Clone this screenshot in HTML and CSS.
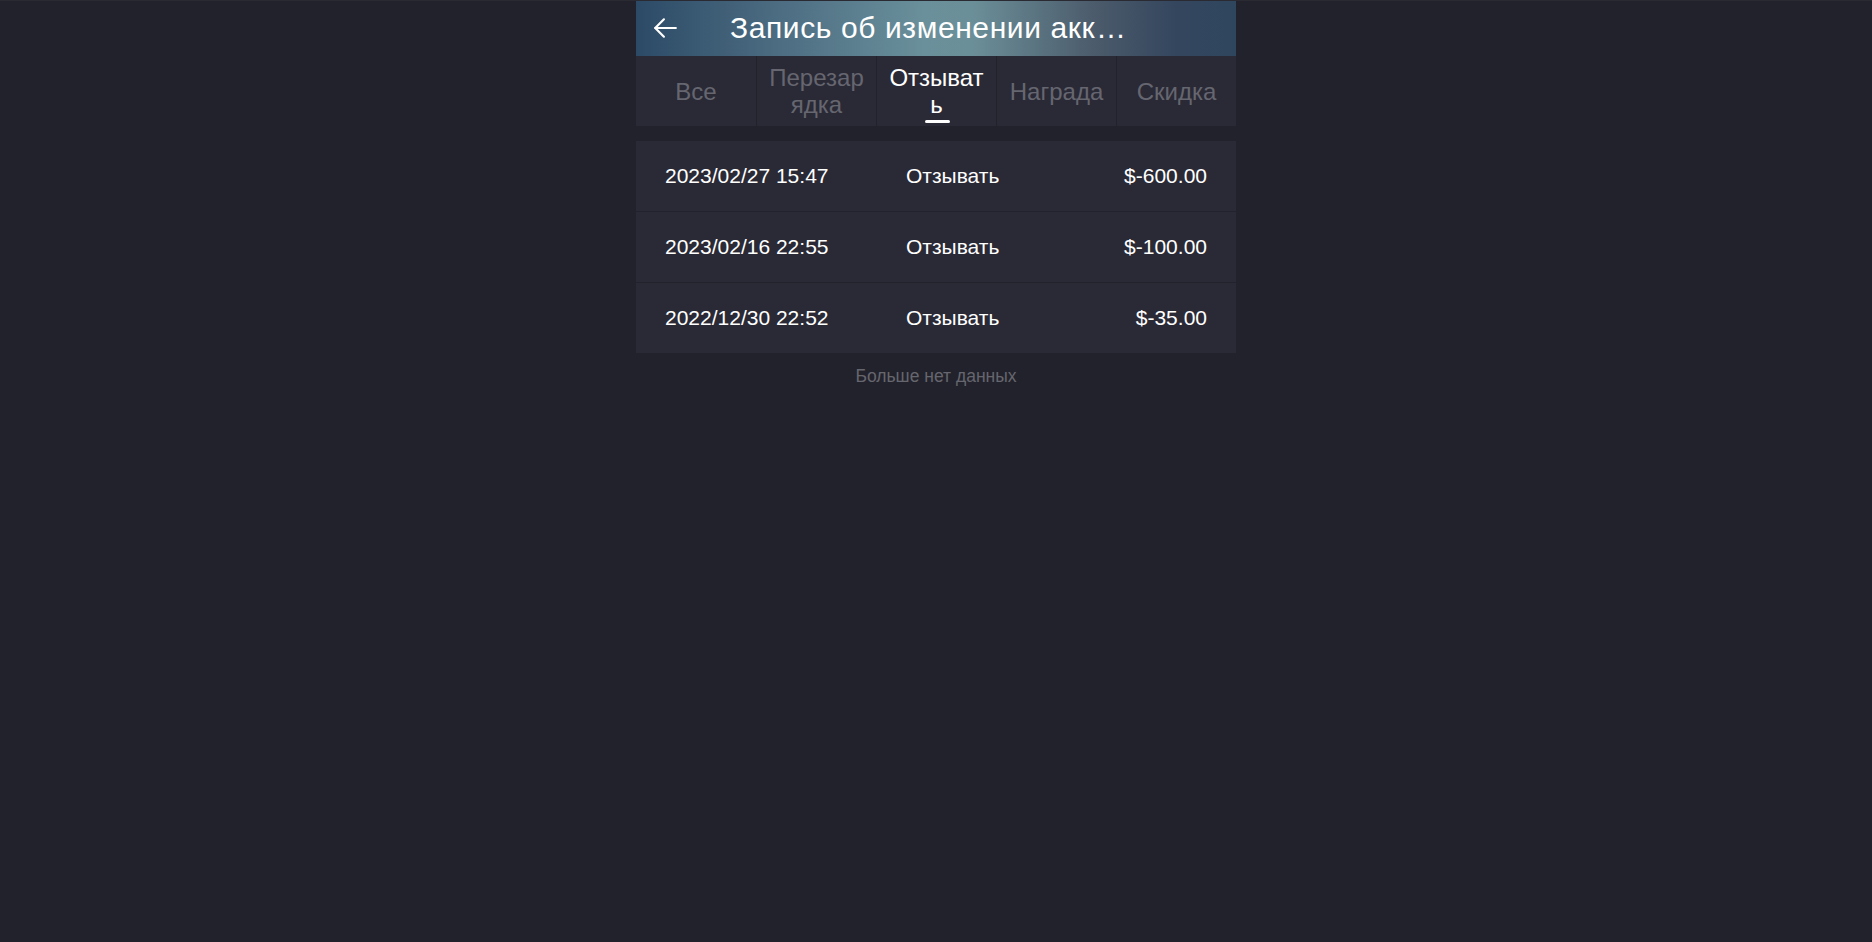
FILE: index.html
```html
<!DOCTYPE html>
<html lang="ru">
<head>
<meta charset="utf-8">
<title>Запись об изменении аккаунта</title>
<link rel="stylesheet" href="styles.css">
</head>
<body>
<div class="app">
  <header class="header">
    <div class="back">
      <svg class="back-icon" viewBox="0 0 24 24" width="26" height="26" fill="none" stroke="#fff" stroke-width="2" stroke-linecap="round" stroke-linejoin="round">
        <path d="M22 12H3"/>
        <path d="M11 4l-8 8 8 8"/>
      </svg>
    </div>
    <h1 class="title">Запись об изменении аккаунта</h1>
    <div class="spacer"></div>
  </header>
  <nav class="tabs">
    <div class="tab">Все</div>
    <div class="tab">Перезарядка</div>
    <div class="tab active">Отзывать<span class="indicator"></span></div>
    <div class="tab">Награда</div>
    <div class="tab">Скидка</div>
  </nav>
  <div class="list">
    <div class="row"><span class="date">2023/02/27 15:47</span><span class="type">Отзывать</span><span class="amount">$-600.00</span></div>
    <div class="row"><span class="date">2023/02/16 22:55</span><span class="type">Отзывать</span><span class="amount">$-100.00</span></div>
    <div class="row"><span class="date">2022/12/30 22:52</span><span class="type">Отзывать</span><span class="amount">$-35.00</span></div>
  </div>
  <div class="footer">Больше нет данных</div>
</div>
</body>
</html>
```

FILE: styles.css
```css
html, body {
  margin: 0;
  padding: 0;
}
body {
  background: #22222c;
  font-family: "Liberation Sans", Arial, sans-serif;
  min-height: 942px;
  border-top: 1px solid #2a2a33;
  box-sizing: border-box;
}
.app {
  width: 600px;
  margin: -1px auto 0;
}
.header {
  height: 56px;
  display: flex;
  align-items: center;
  background: linear-gradient(90deg, #2c4a66 0%, #4a6a80 22%, #6a909b 48%, #6b8f98 56%, #4c5c6c 76%, #34465e 90%, #2f465f 100%);
}
.back {
  width: 94px;
  flex: none;
  display: flex;
  align-items: center;
  padding-left: 16px;
  box-sizing: border-box;
}
.back-icon {
  display: block;
}
.title {
  width: 400px;
  flex: none;
  margin: 0;
  font-size: 30px;
  letter-spacing: 0.6px;
  font-weight: normal;
  color: #fff;
  white-space: nowrap;
  overflow: hidden;
  text-overflow: ellipsis;
  line-height: 56px;
}
.spacer {
  flex: 1;
}
.tabs {
  display: grid;
  grid-template-columns: repeat(5, 1fr);
  height: 70px;
  background: #2a2a36;
}
.tab {
  position: relative;
  display: flex;
  align-items: center;
  justify-content: center;
  text-align: center;
  font-size: 24px;
  line-height: 27px;
  color: #666670;
  word-break: break-all;
  padding: 0 7px;
  border-left: 1px solid #22222c;
}
.tab:first-child {
  border-left: none;
}
.tab.active {
  color: #fff;
}
.indicator {
  position: absolute;
  left: 50%;
  bottom: 3px;
  width: 25px;
  height: 3px;
  margin-left: -12px;
  border-radius: 2px;
  background: #fff;
}
.list {
  margin-top: 15px;
  background: #2a2a36;
}
.row {
  display: grid;
  grid-template-columns: 241px 1fr auto;
  align-items: center;
  height: 70px;
  padding: 0 29px;
  font-size: 21px;
  color: #fff;
  border-top: 1px solid #22222c;
}
.row:first-child {
  border-top: none;
}
.amount {
  text-align: right;
}
.footer {
  text-align: center;
  color: #66666e;
  font-size: 17.5px;
  line-height: 21px;
  padding: 13px 0 10px;
}
```
